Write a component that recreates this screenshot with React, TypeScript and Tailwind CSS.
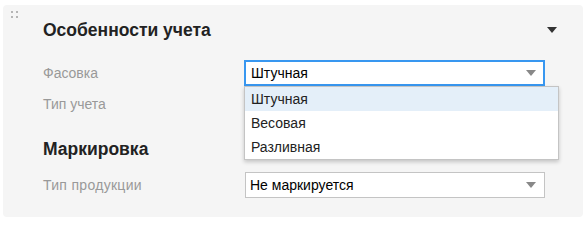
import { useState } from "react";

const font = { fontFamily: '"Liberation Sans", Arial, sans-serif' };

function Arrow({ className }: { className: string }) {
  return (
    <svg width="10" height="6" viewBox="0 0 10 6" className={className}>
      <path d="M0 0 L10 0 L5 6 Z" fill="currentColor" />
    </svg>
  );
}

const options = ["Штучная", "Весовая", "Разливная"];

export default function App() {
  const [packing] = useState("Штучная");
  const [hovered] = useState(0);

  return (
    <div className="pl-[3px] pt-[5px] bg-white min-h-screen" style={font}>
      <div className="relative w-[580px] h-[212px] bg-[#f5f5f5] rounded-sm">
        {/* drag handle */}
        <div className="absolute left-[8px] top-[6px] grid grid-cols-2 gap-[3px]">
          <span className="w-[2px] h-[2px] bg-[#b5b5b5]" />
          <span className="w-[2px] h-[2px] bg-[#b5b5b5]" />
          <span className="w-[2px] h-[2px] bg-[#b5b5b5]" />
          <span className="w-[2px] h-[2px] bg-[#b5b5b5]" />
        </div>

        <div className="pl-[40px] pr-[26px] pt-[13px]">
          <div className="flex items-center justify-between h-[24px]">
            <h2 className="text-[17.5px] leading-[24px] font-bold text-[#222]">
              Особенности учета
            </h2>
            <Arrow className="text-[#333]" />
          </div>

          <div className="mt-[18px] flex items-center h-[26px]">
            <div className="w-[201px] text-[14px] text-[#999]">Фасовка</div>
            <div className="relative">
              <div className="w-[301px] h-[26px] border-2 border-[#3897f0] bg-white flex items-center justify-between pl-[5px] pr-[7px] text-[14px] text-black">
                <span>{packing}</span>
                <Arrow className="text-[#888]" />
              </div>
              <ul className="absolute left-0 top-full z-10 w-[315px] bg-white border border-[#c4c4c4] shadow-[0_2px_4px_rgba(0,0,0,0.2)] text-[14px] text-[#222]">
                {options.map((o, i) => (
                  <li
                    key={o}
                    className={
                      i === hovered
                        ? "h-[24px] leading-[24px] pl-[6px] bg-[#e4eff9]"
                        : "h-[24px] leading-[24px] pl-[6px]"
                    }
                  >
                    {o}
                  </li>
                ))}
              </ul>
            </div>
          </div>

          <div className="mt-[5px] flex items-center h-[26px]">
            <div className="w-[202px] text-[14px] text-[#999]">Тип учета</div>
            <div className="w-[300px] h-[26px] border border-[#c4c4c4] bg-white" />
          </div>

          <h2 className="mt-[20px] text-[17.5px] leading-[24px] font-bold text-[#222]">
            Маркировка
          </h2>

          <div className="mt-[11px] flex items-center h-[26px]">
            <div className="w-[202px] text-[14px] tracking-[0.3px] text-[#999]">
              Тип продукции
            </div>
            <div className="w-[300px] h-[26px] border border-[#c4c4c4] bg-white flex items-center justify-between pl-[4px] pr-[8px] text-[14px] text-black">
              <span>Не маркируется</span>
              <Arrow className="text-[#888]" />
            </div>
          </div>
        </div>
      </div>
    </div>
  );
}
